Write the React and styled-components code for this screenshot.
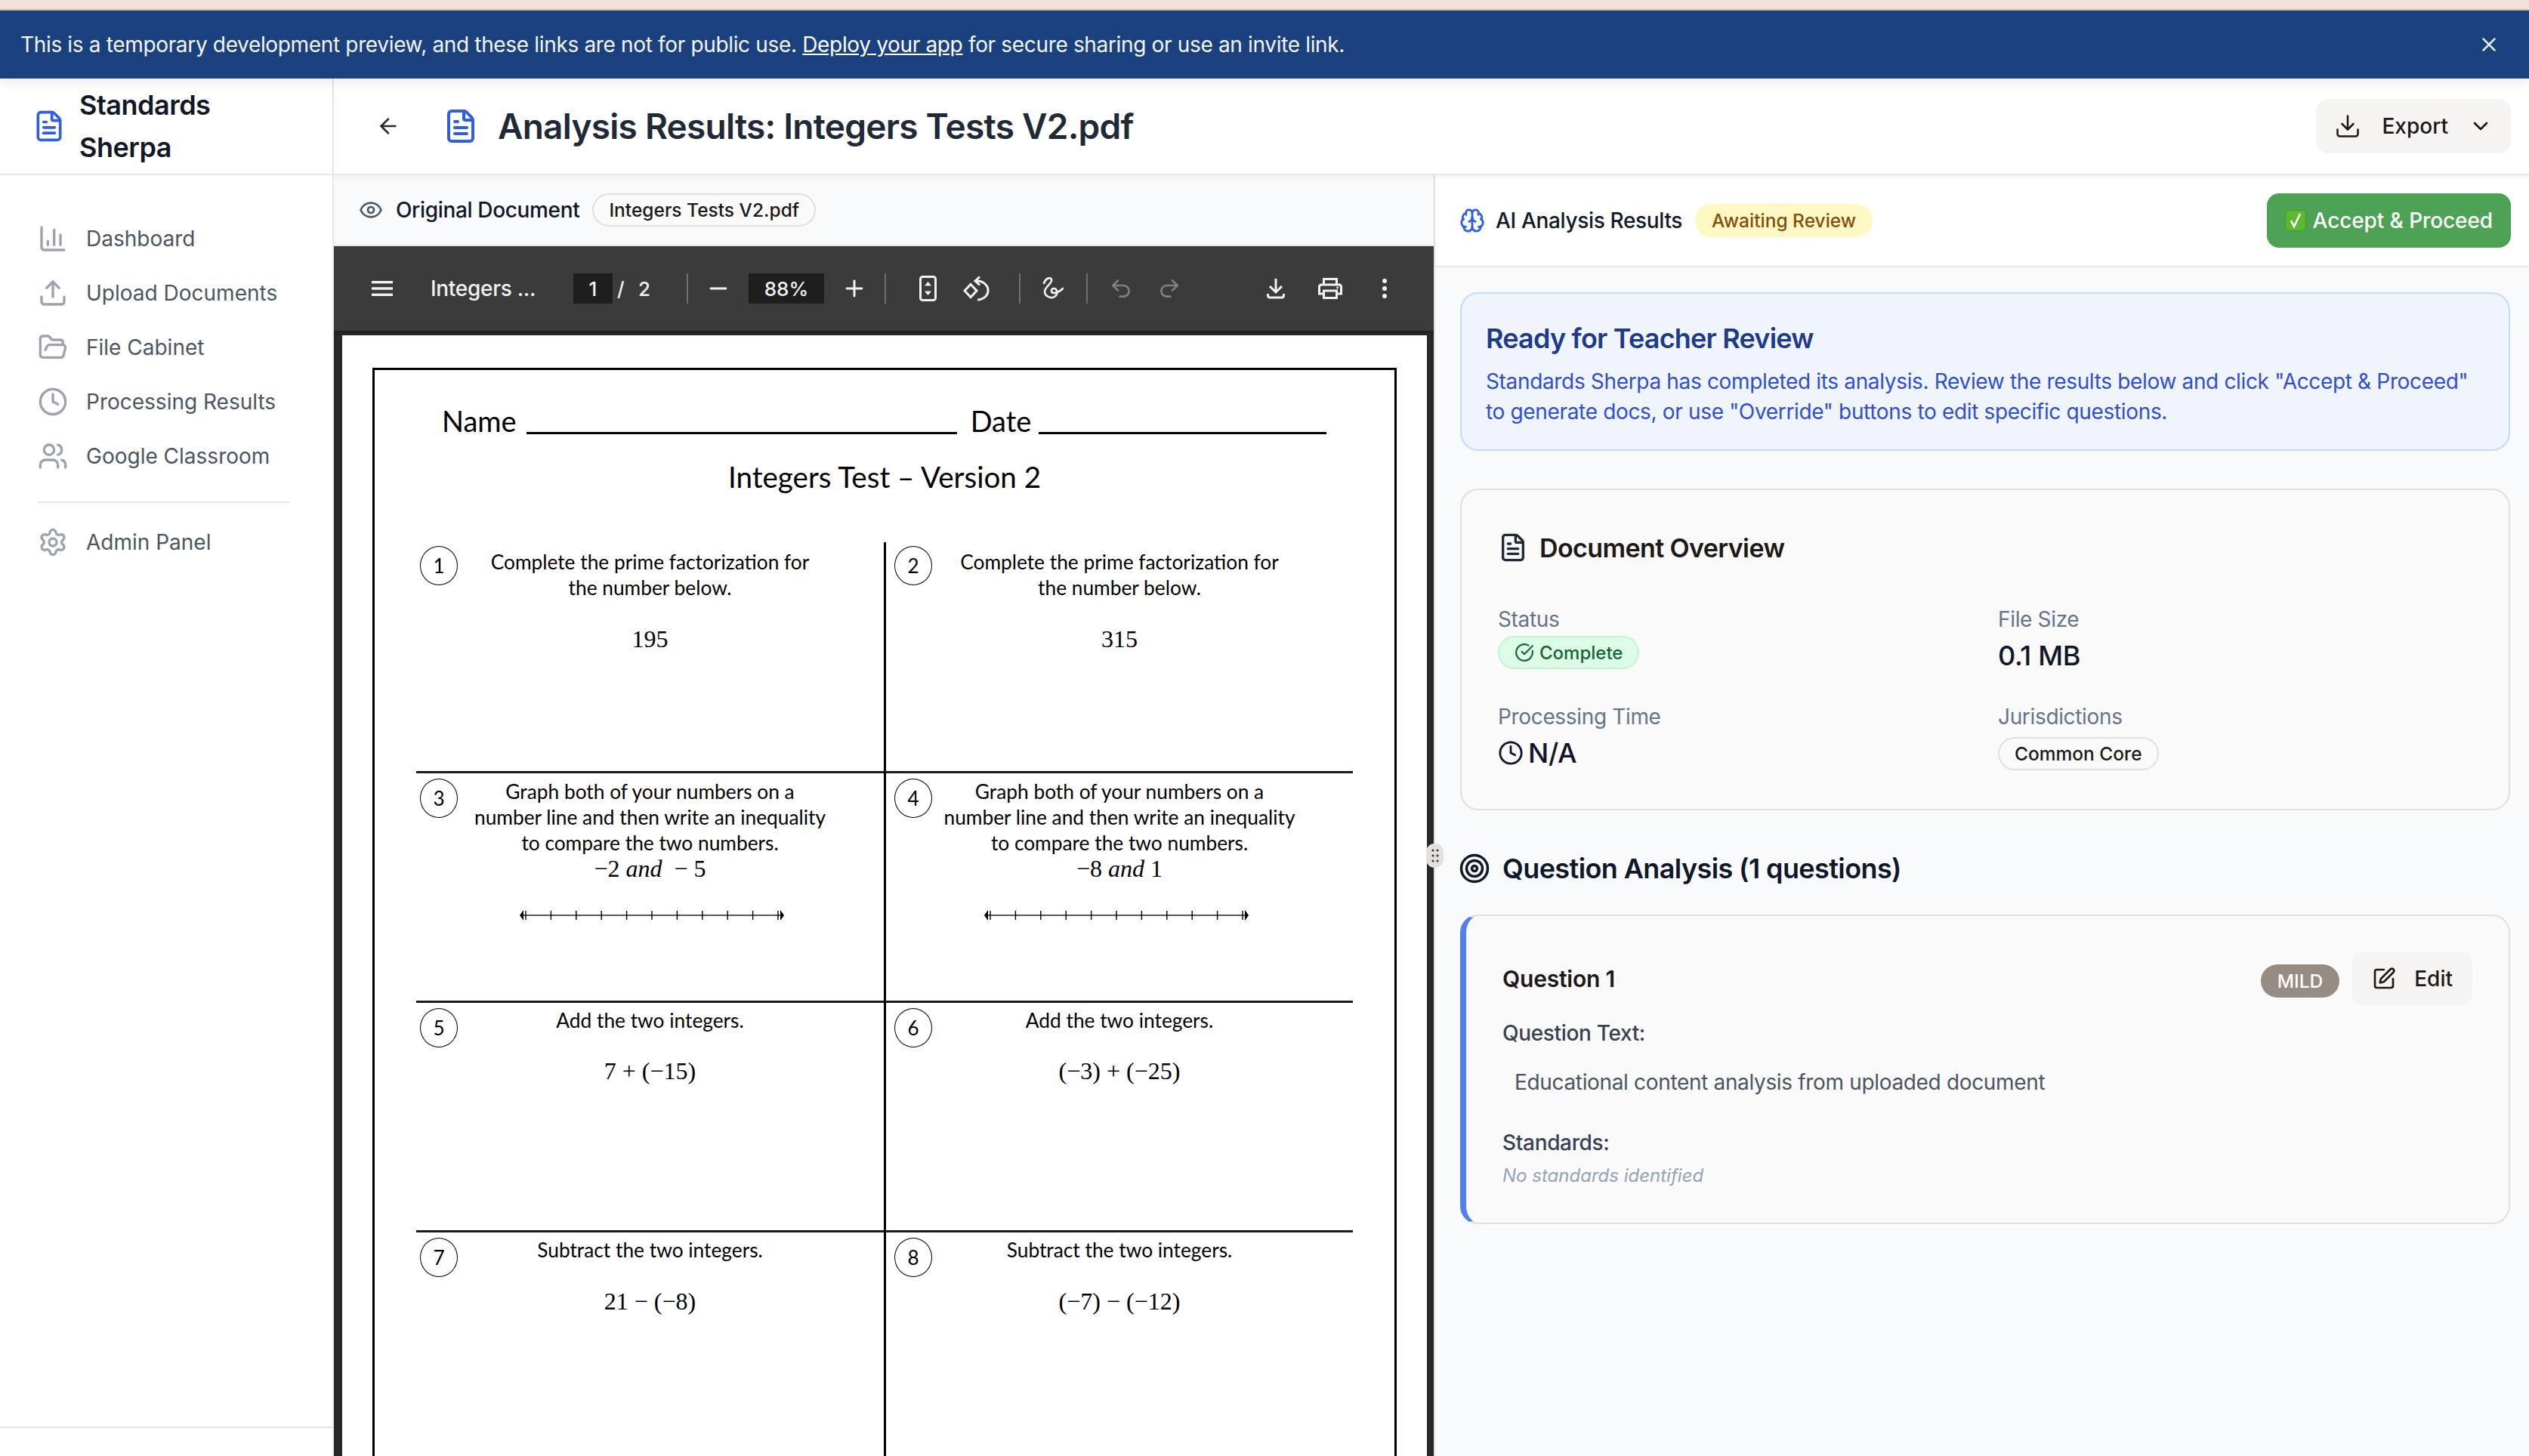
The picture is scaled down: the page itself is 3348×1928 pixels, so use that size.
import React from 'react';
import styled, { createGlobalStyle } from 'styled-components';
import {
    ArrowLeft, Brain, ChartColumn, ChevronDown, CircleCheckBig, Clock, Download, Eye, FileText,
    FolderOpen, Minus, Plus, Redo2, Settings, SquarePen, Target, Undo2, Upload, Users, X,
} from 'lucide-react';

const GlobalStyle = createGlobalStyle`
    html, body {
        margin: 0;
        padding: 0;
        height: 100%;
        overflow: hidden;
        background: #fff;
        font-family: Inter, "Liberation Sans", sans-serif;
    }
    * { box-sizing: border-box; }
`;

const navItems = [
    { label: 'Dashboard', icon: ChartColumn },
    { label: 'Upload Documents', icon: Upload },
    { label: 'File Cabinet', icon: FolderOpen },
    { label: 'Processing Results', icon: Clock },
    { label: 'Google Classroom', icon: Users },
];

const questions = [
    { n: 1, top: 9, text: ['Complete the prime factorization for', 'the number below.'], math: '195', gap: 34 },
    { n: 2, top: 9, text: ['Complete the prime factorization for', 'the number below.'], math: '315', gap: 34 },
    { n: 3, top: 7, text: ['Graph both of your numbers on a', 'number line and then write an inequality', 'to compare the two numbers.'], math: <>−2 <i>and</i>  − 5</>, gap: 0, line: 2 },
    { n: 4, top: 7, text: ['Graph both of your numbers on a', 'number line and then write an inequality', 'to compare the two numbers.'], math: <>−8 <i>and</i> 1</>, gap: 0, line: -4 },
    { n: 5, top: 6, text: ['Add the two integers.'], math: '7 + (−15)', gap: 33 },
    { n: 6, top: 6, text: ['Add the two integers.'], math: '(−3) + (−25)', gap: 33 },
    { n: 7, top: 6, text: ['Subtract the two integers.'], math: '21 − (−8)', gap: 34 },
    { n: 8, top: 6, text: ['Subtract the two integers.'], math: '(−7) − (−12)', gap: 34 },
];

function NumberLine({ shift }) {
    const ticks = Array.from(Array(11).keys());
    return (
        <LineArt $shift={shift} width="350" height="24" viewBox="0 0 350 24">
            <path d="M0 12 L5 5 V19 Z M350 12 L345 5 V19 Z" fill="#000" />
            <path d="M4 12 H346" stroke="#222" strokeWidth="1.4" />
            {ticks.map((t) => (
                <path key={t} d={`M${8 + t * 33.4} 6 V18`} stroke="#000" strokeWidth="1.4" />
            ))}
        </LineArt>
    );
}

function HamburgerIcon() {
    return (
        <svg width="28" height="20" viewBox="0 0 28 20" fill="#f1f1f1">
            <rect y="0" width="28" height="3.4" />
            <rect y="8.3" width="28" height="3.4" />
            <rect y="16.6" width="28" height="3.4" />
        </svg>
    );
}

function FitIcon() {
    return (
        <svg width="23" height="34" viewBox="0 0 23 34">
            <rect x="1.5" y="1.5" width="20" height="31" rx="3" fill="none" stroke="#f1f1f1" strokeWidth="3" />
            <path d="M11.5 8 L16 13.5 H7 Z M11.5 26 L7 20.5 H16 Z" fill="#f1f1f1" />
        </svg>
    );
}

function RotateIcon() {
    return (
        <svg width="36" height="34" viewBox="0 0 36 34" fill="none" stroke="#f1f1f1" strokeWidth="3">
            <path d="M10 11.5 L18 20 L10 28.5 L2 20 Z" />
            <path d="M17 7 C 27 6, 34 14, 33 21 C 32 28, 25 32, 19 32" />
            <path d="M22 1.5 L16 7 L22 12.5" />
        </svg>
    );
}

function DrawIcon() {
    return (
        <svg width="28" height="30" viewBox="0 0 28 30" fill="none" stroke="#f1f1f1" strokeWidth="2.6" strokeLinecap="round">
            <path d="M2 8 C 4 2, 10 -1, 12 3 C 14 7, 3 13, 3 19 C 3 25, 11 29, 16 26 C 21 23, 20 15, 15 15 C 11 15, 11 21, 15 21 C 19 21, 24 18, 27 15" />
        </svg>
    );
}

function TrayDownload() {
    return (
        <svg width="24" height="28" viewBox="0 0 24 28" fill="none" stroke="#f1f1f1" strokeWidth="3">
            <path d="M12 1 V18 M4 11 L12 19 L20 11" />
            <path d="M1.5 21 V23 Q1.5 26 4.5 26 H19.5 Q22.5 26 22.5 23 V21" />
        </svg>
    );
}

function PrintIcon() {
    return (
        <svg width="32" height="28" viewBox="0 0 32 28" fill="none" stroke="#f1f1f1" strokeWidth="3">
            <path d="M7.5 9 V1.5 H24.5 V9" />
            <path d="M7.5 21 H1.5 V12 Q1.5 9 4.5 9 H27.5 Q30.5 9 30.5 12 V21 H24.5" />
            <rect x="7.5" y="17" width="17" height="9.5" />
            <circle cx="25.5" cy="13" r="1.4" fill="#f1f1f1" stroke="none" />
        </svg>
    );
}

function DotsIcon() {
    return (
        <svg width="8" height="28" viewBox="0 0 8 28" fill="#f1f1f1">
            <circle cx="4" cy="4" r="3" />
            <circle cx="4" cy="14" r="3" />
            <circle cx="4" cy="24" r="3" />
        </svg>
    );
}

function CheckEmoji() {
    return (
        <svg width="28" height="28" viewBox="0 0 28 28">
            <rect x="0.5" y="0.5" width="27" height="27" rx="4" fill="#5cb82f" stroke="#3f9a2a" />
            <path d="M8 14 L12 22 L20 5" fill="none" stroke="#fff" strokeWidth="2.6" />
        </svg>
    );
}

function GripDots() {
    return (
        <svg width="10" height="18" viewBox="0 0 10 18" fill="#333">
            <circle cx="2" cy="2" r="1.5" /><circle cx="8" cy="2" r="1.5" />
            <circle cx="2" cy="9" r="1.5" /><circle cx="8" cy="9" r="1.5" />
            <circle cx="2" cy="16" r="1.5" /><circle cx="8" cy="16" r="1.5" />
        </svg>
    );
}

export default function App() {
    return (
        <Page>
            <GlobalStyle />
            <TopStrip />
            <Banner>
                <span>
                    This is a temporary development preview, and these links are not for public use.{' '}
                    <BannerLink href="#">Deploy your app</BannerLink> for secure sharing or use an invite link.
                </span>
                <X size={30} color="#dfe7f2" strokeWidth={2} />
            </Banner>
            <Body>
                <Sidebar>
                    <Brand>
                        <FileText size={44} color="#2f5fe0" strokeWidth={2} />
                        <BrandName>Standards Sherpa</BrandName>
                    </Brand>
                    <Nav>
                        {navItems.map(({ label, icon: Icon }) => (
                            <NavItem key={label}>
                                <Icon size={40} color="#9ca3af" strokeWidth={2} />
                                {label}
                            </NavItem>
                        ))}
                        <NavRule />
                        <NavItem>
                            <Settings size={40} color="#9ca3af" strokeWidth={2} />
                            Admin Panel
                        </NavItem>
                    </Nav>
                    <SidebarFoot />
                </Sidebar>
                <Main>
                    <Header>
                        <ArrowLeft size={32} color="#1f2937" strokeWidth={2} />
                        <TitleIcon><FileText size={48} color="#2f5fe0" strokeWidth={2} /></TitleIcon>
                        <Title>Analysis Results: Integers Tests V2.pdf</Title>
                        <ExportButton>
                            <Download size={36} strokeWidth={1.7} />
                            <span>Export</span>
                            <ChevronDown size={32} strokeWidth={2} />
                        </ExportButton>
                    </Header>
                    <Split>
                        <LeftPanel>
                            <DocBar>
                                <Eye size={32} color="#475569" strokeWidth={2} />
                                <DocLabel>Original Document</DocLabel>
                                <Chip>Integers Tests V2.pdf</Chip>
                            </DocBar>
                            <Viewer>
                                <Toolbar>
                                    <Tool $ml={0} $w={28}><HamburgerIcon /></Tool>
                                    <PdfName>Integers ...</PdfName>
                                    <ToolInput $ml={51} $w={52}>1</ToolInput>
                                    <PageTotal>
                                        <span>/</span>
                                        <span>2</span>
                                    </PageTotal>
                                    <ToolSep $ml={48} />
                                    <Tool $ml={29} $w={22}><Minus size={34} color="#f1f1f1" strokeWidth={2.1} /></Tool>
                                    <ToolInput $ml={29} $w={100}>88%</ToolInput>
                                    <Tool $ml={29} $w={22}><Plus size={34} color="#f1f1f1" strokeWidth={2.1} /></Tool>
                                    <ToolSep $ml={29} />
                                    <Tool $ml={44} $w={23}><FitIcon /></Tool>
                                    <Tool $ml={35} $w={36}><RotateIcon /></Tool>
                                    <ToolSep $ml={38} />
                                    <Tool $ml={29} $w={28}><DrawIcon /></Tool>
                                    <ToolSep $ml={30} />
                                    <Tool $ml={32} $w={24}><Undo2 size={32} color="#808080" strokeWidth={2} /></Tool>
                                    <Tool $ml={40} $w={24}><Redo2 size={32} color="#808080" strokeWidth={2} /></Tool>
                                    <Tool $ml={117} $w={24}><TrayDownload /></Tool>
                                    <Tool $ml={44} $w={32}><PrintIcon /></Tool>
                                    <Tool $ml={52} $w={8}><DotsIcon /></Tool>
                                </Toolbar>
                                <Paper>
                                    <Sheet>
                                        <NameRow>
                                            <span>Name</span>
                                            <Blank $l={13} $w={570} />
                                            <DateLabel>Date</DateLabel>
                                            <Blank $l={10} $w={381} />
                                        </NameRow>
                                        <SheetTitle>Integers Test – Version 2</SheetTitle>
                                        <QuestionGrid>
                                            {questions.map((q) => (
                                                <Cell key={q.n} $even={q.n % 2 === 0} $first={q.n <= 2} $top={q.top}>
                                                    <Circle $even={q.n % 2 === 0} $first={q.n <= 2}>{q.n}</Circle>
                                                    {q.text.map((t) => <CellLine key={t}>{t}</CellLine>)}
                                                    <MathLine $gap={q.gap}>{q.math}</MathLine>
                                                    {q.line ? <NumberLine shift={q.line} /> : null}
                                                </Cell>
                                            ))}
                                        </QuestionGrid>
                                    </Sheet>
                                </Paper>
                            </Viewer>
                        </LeftPanel>
                        <Handle><GripDots /></Handle>
                        <RightPanel>
                            <ResultsBar>
                                <Brain size={34} color="#2f5fe0" strokeWidth={2} />
                                <ResultsLabel>AI Analysis Results</ResultsLabel>
                                <AwaitBadge>Awaiting Review</AwaitBadge>
                                <AcceptButton><CheckEmoji />Accept &amp; Proceed</AcceptButton>
                            </ResultsBar>
                            <Results>
                                <Notice>
                                    <NoticeTitle>Ready for Teacher Review</NoticeTitle>
                                    <NoticeText>
                                        Standards Sherpa has completed its analysis. Review the results below and click "Accept &amp; Proceed"<br />
                                        to generate docs, or use "Override" buttons to edit specific questions.
                                    </NoticeText>
                                </Notice>
                                <Card>
                                    <CardTitle>
                                        <FileText size={40} color="#1f2937" strokeWidth={2} />
                                        Document Overview
                                    </CardTitle>
                                    <Fields>
                                        <Field>
                                            <FieldLabel>Status</FieldLabel>
                                            <StatusBadge><CircleCheckBig size={26} strokeWidth={2} />Complete</StatusBadge>
                                        </Field>
                                        <Field>
                                            <FieldLabel>File Size</FieldLabel>
                                            <FieldValue>0.1 MB</FieldValue>
                                        </Field>
                                        <Field>
                                            <FieldLabel>Processing Time</FieldLabel>
                                            <FieldValue><Clock size={34} strokeWidth={2} />N/A</FieldValue>
                                        </Field>
                                        <Field>
                                            <FieldLabel>Jurisdictions</FieldLabel>
                                            <JurisdictionChip>Common Core</JurisdictionChip>
                                        </Field>
                                    </Fields>
                                </Card>
                                <SectionTitle>
                                    <Target size={42} color="#111827" strokeWidth={2} />
                                    Question Analysis (1 questions)
                                </SectionTitle>
                                <QuestionCard>
                                    <QuestionHead>
                                        <QuestionName>Question 1</QuestionName>
                                        <MildBadge>MILD</MildBadge>
                                        <EditButton><SquarePen size={32} strokeWidth={2} />Edit</EditButton>
                                    </QuestionHead>
                                    <SubLabel>Question Text:</SubLabel>
                                    <QuestionBody>Educational content analysis from uploaded document</QuestionBody>
                                    <SubLabel $gap={40}>Standards:</SubLabel>
                                    <EmptyNote>No standards identified</EmptyNote>
                                </QuestionCard>
                            </Results>
                        </RightPanel>
                    </Split>
                </Main>
            </Body>
        </Page>
    );
}

const Page = styled.div`
    height: 100vh;
    display: flex;
    flex-direction: column;
    overflow: hidden;
    letter-spacing: -0.34px;
`;
const TopStrip = styled.div`
    height: 14px;
    flex: none;
    background: #f3e1d8;
    border-bottom: 2px solid #cdbcb4;
`;
const Banner = styled.div`
    height: 90px;
    flex: none;
    display: flex;
    align-items: center;
    justify-content: space-between;
    padding: 0 38px 0 27px;
    background: #1a417e;
    color: #f2f5fa;
    font-size: 28px;
    box-shadow: 0 6px 14px rgba(0, 0, 0, 0.08);
    position: relative;
    z-index: 2;
`;
const BannerLink = styled.a`
    color: #fff;
    text-decoration: underline;
`;
const Body = styled.div`
    flex: 1;
    min-height: 0;
    display: flex;
`;
const Sidebar = styled.aside`
    width: 442px;
    flex: none;
    display: flex;
    flex-direction: column;
    border-right: 2px solid #e5e7eb;
    background: #fff;
`;
const Brand = styled.div`
    height: 128px;
    flex: none;
    display: flex;
    align-items: center;
    gap: 18px;
    padding-left: 43px;
    border-bottom: 2px solid #e5e7eb;
`;
const BrandName = styled.div`
    width: 240px;
    font-size: 36px;
    line-height: 56px;
    font-weight: 600;
    letter-spacing: -0.5px;
    color: #111827;
`;
const Nav = styled.nav`
    padding-top: 48px;
    flex: 1;
`;
const NavItem = styled.div`
    height: 72px;
    display: flex;
    align-items: center;
    gap: 24px;
    padding-left: 50px;
    font-size: 28px;
    letter-spacing: 0;
    color: #4b5563;
`;
const NavRule = styled.div`
    height: 2px;
    margin: 24px 56px 16px 50px;
    background: #e5e7eb;
`;
const SidebarFoot = styled.div`
    height: 39px;
    flex: none;
    border-top: 2px solid #e5e7eb;
`;
const Main = styled.div`
    flex: 1;
    min-width: 0;
    display: flex;
    flex-direction: column;
`;
const Header = styled.header`
    height: 128px;
    flex: none;
    display: flex;
    align-items: center;
    padding: 0 24px 0 56px;
    background: #fff;
    border-bottom: 2px solid #e5e7eb;
    box-shadow: 0 3px 6px rgba(0, 0, 0, 0.05);
    position: relative;
    z-index: 1;
`;
const TitleIcon = styled.div`
    display: flex;
    margin-left: 56px;
`;
const Title = styled.h1`
    margin: 0 0 0 25px;
    font-size: 46px;
    font-weight: 600;
    letter-spacing: -0.75px;
    color: #1f2937;
`;
const ExportButton = styled.button`
    margin-left: auto;
    height: 72px;
    display: flex;
    align-items: center;
    gap: 27px;
    padding: 0 24px;
    border: 0;
    border-radius: 16px;
    background: #f5f4f2;
    color: #1c1917;
    font: 500 28px Inter, sans-serif;
    letter-spacing: 0;
`;
const Split = styled.div`
    flex: 1;
    min-height: 0;
    display: flex;
    position: relative;
`;
const LeftPanel = styled.section`
    width: 1458px;
    flex: none;
    display: flex;
    flex-direction: column;
    border-right: 2px solid #e3e0db;
`;
const DocBar = styled.div`
    height: 94px;
    flex: none;
    display: flex;
    align-items: center;
    padding-left: 33px;
    background: #f8f9fb;
    border-bottom: 2px solid #e5e7eb;
`;
const DocLabel = styled.span`
    margin: 0 17px;
    font-size: 28px;
    font-weight: 500;
    color: #111827;
`;
const Chip = styled.span`
    height: 44px;
    display: inline-flex;
    align-items: center;
    padding: 0 20px;
    border: 2px solid #e3e0db;
    border-radius: 22px;
    background: #fafafa;
    font-size: 24.5px;
    font-weight: 500;
    letter-spacing: 0;
    color: #1c1917;
`;
const Viewer = styled.div`
    flex: 1;
    min-height: 0;
    background: #282828;
    overflow: hidden;
`;
const Toolbar = styled.div`
    height: 112px;
    display: flex;
    align-items: center;
    padding-left: 50px;
    background: #3b3b3b;
    color: #f1f1f1;
    letter-spacing: 0;
    box-shadow: 0 2px 4px rgba(0, 0, 0, 0.3);
`;
const Tool = styled.div`
    flex: none;
    display: flex;
    align-items: center;
    justify-content: center;
    width: ${(p) => p.$w}px;
    margin-left: ${(p) => p.$ml}px;
    svg { flex: none; }
`;
const PdfName = styled.span`
    flex: none;
    width: 138px;
    margin-left: 50px;
    font-size: 28px;
    font-weight: 500;
    letter-spacing: -0.3px;
    white-space: nowrap;
`;
const ToolInput = styled.div`
    flex: none;
    height: 40px;
    display: flex;
    align-items: center;
    justify-content: center;
    width: ${(p) => p.$w}px;
    margin-left: ${(p) => p.$ml}px;
    background: #1e1e1e;
    font-size: 26px;
    font-weight: 500;
`;
const PageTotal = styled.div`
    flex: none;
    width: 50px;
    display: flex;
    justify-content: space-between;
    padding-left: 6px;
    font-size: 26px;
    font-weight: 500;
`;
const ToolSep = styled.div`
    flex: none;
    width: 2px;
    height: 40px;
    margin-left: ${(p) => p.$ml}px;
    background: #6e6e6e;
`;
const Paper = styled.div`
    margin: 6px 9px 0 11px;
    padding: 43px 40px 0;
    background: #fff;
    height: 1600px;
`;
const Sheet = styled.div`
    height: 1600px;
    padding-top: 43px;
    border: 3px solid #000;
    font-family: Lato, "Liberation Sans", sans-serif;
    letter-spacing: 0;
    color: #000;
`;
const NameRow = styled.div`
    height: 48px;
    display: flex;
    align-items: flex-end;
    padding-left: 89px;
    font-size: 38px;
    line-height: 48px;
`;
const DateLabel = styled.span`
    margin-left: 18px;
`;
const Blank = styled.span`
    width: ${(p) => p.$w}px;
    height: 3px;
    margin: 0 0 6px ${(p) => p.$l}px;
    background: #000;
`;
const SheetTitle = styled.div`
    margin-top: 26px;
    height: 48px;
    text-align: center;
    font-size: 38.6px;
    line-height: 48px;
`;
const QuestionGrid = styled.div`
    margin: 63px 0 0 55px;
    width: 1240px;
    display: grid;
    grid-template-columns: 619px 621px;
    grid-template-rows: 303px 304px 304px 304px;
`;
const Cell = styled.div`
    position: relative;
    padding-top: ${(p) => p.$top}px;
    text-align: center;
    border-left: ${(p) => (p.$even ? '3px solid #000' : '0')};
    border-top: ${(p) => (p.$first ? '0' : '3px solid #1a1a1a')};
`;
const Circle = styled.div`
    position: absolute;
    left: ${(p) => (p.$even ? 11 : 5)}px;
    top: ${(p) => (p.$first ? 5 : 7)}px;
    width: 50px;
    height: 52px;
    display: flex;
    align-items: center;
    justify-content: center;
    border: 1.5px solid #000;
    border-radius: 50%;
    background: #fff;
    font-size: 26px;
`;
const CellLine = styled.div`
    font-size: 26.3px;
    line-height: 34px;
    white-space: nowrap;
`;
const MathLine = styled.div`
    margin-top: ${(p) => p.$gap}px;
    font-family: "Liberation Serif", serif;
    font-size: 32px;
    line-height: 34px;
    white-space: pre;
`;
const LineArt = styled.svg`
    display: block;
    margin: 33px auto 0;
    transform: translateX(${(p) => p.$shift}px);
`;
const Handle = styled.div`
    position: absolute;
    left: 1446px;
    top: 885px;
    width: 23px;
    height: 32px;
    display: flex;
    align-items: center;
    justify-content: center;
    border-radius: 11px;
    background: #e3e0db;
`;
const RightPanel = styled.section`
    flex: 1;
    min-width: 0;
    display: flex;
    flex-direction: column;
    background: #f8fafc;
`;
const ResultsBar = styled.div`
    height: 122px;
    flex: none;
    display: flex;
    align-items: center;
    padding: 0 24px 0 32px;
    background: #fff;
    border-bottom: 2px solid #e2e8f0;
`;
const ResultsLabel = styled.span`
    margin: 0 17px 0 14px;
    font-size: 28px;
    font-weight: 500;
    color: #111827;
`;
const AwaitBadge = styled.span`
    height: 44px;
    display: inline-flex;
    align-items: center;
    padding: 0 22px;
    border-radius: 22px;
    background: #fef9c3;
    color: #854d0e;
    font-size: 24.5px;
    font-weight: 500;
    letter-spacing: 0;
`;
const AcceptButton = styled.button`
    margin-left: auto;
    height: 72px;
    display: flex;
    align-items: center;
    gap: 9px;
    padding: 0 24px;
    border: 0;
    border-radius: 16px;
    background: #4ea256;
    color: #fff;
    font: 500 28px Inter, sans-serif;
    letter-spacing: -0.1px;
`;
const Results = styled.div`
    flex: 1;
    padding: 33px 25px 0 33px;
    overflow: hidden;
`;
const Notice = styled.div`
    height: 210px;
    padding: 35px 32px 0;
    border: 2px solid #bfdbfe;
    border-radius: 24px;
    background: #f0f5fd;
`;
const NoticeTitle = styled.h2`
    margin: 0 0 13px;
    font-size: 36px;
    line-height: 48px;
    font-weight: 600;
    letter-spacing: -0.8px;
    color: #1e3a8a;
`;
const NoticeText = styled.p`
    margin: 0;
    font-size: 28px;
    line-height: 40px;
    white-space: nowrap;
    color: #2f4fd0;
`;
const Card = styled.div`
    height: 426px;
    margin-top: 50px;
    padding: 52px 48px 0;
    border: 2px solid #e3e0db;
    border-radius: 24px;
    background: #fafafa;
`;
const CardTitle = styled.h3`
    margin: 0;
    height: 48px;
    display: flex;
    align-items: center;
    gap: 15px;
    font-size: 34px;
    font-weight: 600;
    letter-spacing: -0.6px;
    color: #1c1917;
`;
const Fields = styled.div`
    margin-top: 51px;
    display: grid;
    grid-template-columns: 662px 1fr;
    grid-auto-rows: 129px;
`;
const Field = styled.div`
    display: flex;
    flex-direction: column;
    align-items: flex-start;
`;
const FieldLabel = styled.span`
    font-size: 28px;
    line-height: 40px;
    color: #64748b;
`;
const FieldValue = styled.div`
    margin-top: 4px;
    display: flex;
    align-items: center;
    gap: 6px;
    font-size: 36px;
    line-height: 48px;
    font-weight: 500;
    color: #0f172a;
`;
const StatusBadge = styled.span`
    margin-top: 2px;
    height: 44px;
    display: inline-flex;
    align-items: center;
    gap: 7px;
    padding: 0 20px;
    border: 2px solid #bbf7d0;
    border-radius: 22px;
    background: #dcfce7;
    color: #166534;
    font-size: 24px;
    font-weight: 500;
    letter-spacing: 0;
`;
const JurisdictionChip = styled(Chip)`
    margin-top: 7px;
`;
const SectionTitle = styled.h3`
    margin: 53px 0 0;
    height: 48px;
    display: flex;
    align-items: center;
    gap: 16px;
    font-size: 36px;
    font-weight: 600;
    letter-spacing: -0.6px;
    color: #0f172a;
    svg { margin-left: -2px; }
`;
const QuestionCard = styled.div`
    height: 410px;
    margin-top: 37px;
    padding: 47px 48px 0;
    border: 2px solid #e3e0db;
    border-left: 8px solid #4f7ff0;
    border-radius: 24px;
    background: #fafafa;
`;
const QuestionHead = styled.div`
    display: flex;
    align-items: center;
`;
const QuestionName = styled.span`
    margin-right: auto;
    font-size: 30px;
    font-weight: 600;
    letter-spacing: -0.2px;
    color: #1c1917;
`;
const MildBadge = styled.span`
    height: 44px;
    margin: 6px 17px 0 0;
    display: inline-flex;
    align-items: center;
    padding: 0 22px;
    border-radius: 22px;
    background: #968c83;
    color: #fff;
    font-size: 24.5px;
    font-weight: 500;
    letter-spacing: 0;
`;
const EditButton = styled.button`
    height: 72px;
    display: flex;
    align-items: center;
    gap: 24px;
    padding: 0 26px;
    border: 0;
    border-radius: 16px;
    background: #f5f4f2;
    color: #1c1917;
    font: 500 28px Inter, sans-serif;
    letter-spacing: 0;
`;
const SubLabel = styled.div`
    margin-top: ${(p) => p.$gap || 16}px;
    font-size: 28px;
    line-height: 40px;
    font-weight: 500;
    color: #374151;
`;
const QuestionBody = styled.p`
    margin: 25px 0 0;
    padding-left: 16px;
    font-size: 28px;
    line-height: 40px;
    color: #4b5563;
`;
const EmptyNote = styled.div`
    margin-top: 8px;
    font-size: 24px;
    line-height: 32px;
    font-style: italic;
    letter-spacing: 0;
    color: #94a3b8;
`;
